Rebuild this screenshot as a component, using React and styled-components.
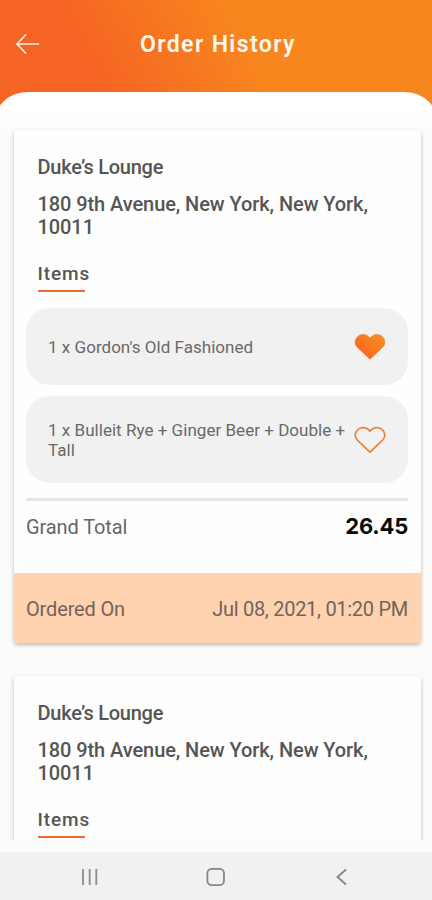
import React from "react";
import styled, { createGlobalStyle } from "styled-components";

const GlobalStyle = createGlobalStyle`
  * { box-sizing: border-box; }
  body { margin: 0; background: #fbfbfb; }
`;

const Screen = styled.div`
  width: 432px;
  height: 900px;
  display: flex;
  flex-direction: column;
  overflow: hidden;
  font-family: Roboto, sans-serif;
  color: #555;
  background: linear-gradient(62deg, #f56423 0px, #f56423 110px, #f8861e 262px) 0 0 / 432px 130px no-repeat #fbfbfb;
`;

const Header = styled.header`
  height: 92px;
  flex: none;
  display: grid;
  grid-template-columns: 56px 1fr 56px;
  align-items: center;
  padding: 0 0 5px;
`;

const BackButton = styled.button`
  border: 0;
  padding: 0 0 0 15px;
  background: none;
  display: flex;
`;

const Title = styled.h1`
  margin: 0;
  padding: 2px 0 0 4px;
  text-align: center;
  white-space: nowrap;
  font: 600 23px/28px Roboto, sans-serif;
  letter-spacing: 1.4px;
  color: #fffaf0;
`;

const Sheet = styled.main`
  flex: none;
  height: 748px;
  margin: 0 -7px;
  padding: 38px 18px 0 21px;
  border-radius: 34px 34px 0 0;
  background: linear-gradient(#fff 0, #fff 20px, #fbfbfb 40px);
  overflow: hidden;
`;

const Card = styled.article`
  height: 513px;
  margin-bottom: 33px;
  display: flex;
  flex-direction: column;
  border-radius: 4px;
  background: #fefefe;
  box-shadow: 0 2px 4px rgba(0, 0, 0, 0.26);
  overflow: hidden;
`;

const Venue = styled.div`
  padding: 26px 23px 0 23.5px;
  font-size: 20px;
  font-weight: 500;
  line-height: 23px;
`;

const VenueName = styled.h2`
  margin: 0 0 14px;
  font: inherit;
  letter-spacing: -0.25px;
`;

const Address = styled.p`
  margin: 0;
  letter-spacing: -0.08px;
`;

const SectionLabel = styled.h3`
  width: max-content;
  margin: 23px 0 0;
  font: 500 19px/23px Roboto, sans-serif;
  letter-spacing: 0.9px;
`;

const Underline = styled.div`
  width: 47px;
  height: 2px;
  margin-top: 5px;
  background: #ee6c2a;
`;

const Items = styled.ul`
  list-style: none;
  margin: 16px 13px 0 12px;
  padding: 0;
  display: flex;
  flex-direction: column;
  gap: 11px;
`;

const Item = styled.li`
  height: ${({ $tall }) => ($tall ? 87 : 77)}px;
  display: flex;
  align-items: center;
  justify-content: space-between;
  padding: 0 22px;
  border-radius: 24px;
  background: #f1f1f1;
  color: #696969;
  font-size: 17px;
  line-height: 20px;
`;

const ItemName = styled.span`
  width: 302px;
  letter-spacing: 0.03px;
`;

const HeartIcon = styled.svg`
  margin-bottom: 1px;
`;

const Total = styled.div`
  height: 74px;
  margin: 15px 13px 0 12px;
  padding-top: 14px;
  border-top: 3px solid #e6e6e6;
  display: flex;
  justify-content: space-between;
  font-size: 20px;
  line-height: 24px;
  letter-spacing: -0.1px;
  color: #666;
`;

const Amount = styled.strong`
  font: 700 22px/23px Inter, sans-serif;
  letter-spacing: -0.2px;
  color: #090909;
`;

const OrderedOn = styled.footer`
  height: 70px;
  margin-top: auto;
  padding: 1px 13px 0 12px;
  display: flex;
  align-items: center;
  justify-content: space-between;
  background: #ffd3b0;
  color: #756259;
  font-size: 20px;
  letter-spacing: -0.15px;
`;

const OrderDate = styled.time`
  letter-spacing: -0.28px;
`;

const SystemBar = styled.nav`
  height: 48px;
  margin-top: auto;
  flex: none;
  display: grid;
  grid-template-columns: repeat(3, 126px);
  justify-content: center;
  align-items: center;
  justify-items: center;
  padding: 1px 0 0;
  background: #f1f1f1;
`;

const HEART =
  "M16 27.2 L3.4 15.2 C1 12.8 0.4 8.8 2.6 5.9 C5.2 2.4 9.6 1.8 12.8 3.4 C14.2 4.1 15.2 5 16 6.2 C16.8 5 17.8 4.1 19.2 3.4 C22.4 1.8 26.8 2.4 29.4 5.9 C31.6 8.8 31 12.8 28.6 15.2 Z";

function Heart({ filled }) {
  return (
    <HeartIcon width="32" height="29" viewBox="0 0 32 29">
      <defs>
        <linearGradient id="heartFill" x1="1" y1="0" x2="0" y2="1">
          <stop offset=".2" stopColor="#fb881d" />
          <stop offset=".8" stopColor="#f56722" />
        </linearGradient>
      </defs>
      <path
        d={HEART}
        fill={filled ? "url(#heartFill)" : "none"}
        stroke={filled ? "url(#heartFill)" : "#ee8138"}
        strokeWidth={filled ? 0.8 : 1.7}
        strokeLinejoin="round"
      />
    </HeartIcon>
  );
}

const order = {
  venue: "Duke’s Lounge",
  address: "180 9th Avenue, New York, New York, 10011",
  items: [
    { name: "1 x Gordon's Old Fashioned", liked: true },
    { name: "1 x Bulleit Rye + Ginger Beer + Double + Tall", liked: false, tall: true },
  ],
  total: "26.45",
  date: "Jul 08, 2021, 01:20 PM",
};

function OrderCard({ data, headingOnly }) {
  return (
    <Card>
      <Venue>
        <VenueName>{data.venue}</VenueName>
        <Address>{data.address}</Address>
        <SectionLabel>Items</SectionLabel>
        <Underline />
      </Venue>
      {!headingOnly && (
        <>
          <Items>
            {data.items.map((item) => (
              <Item key={item.name} $tall={item.tall}>
                <ItemName>{item.name}</ItemName>
                <Heart filled={item.liked} />
              </Item>
            ))}
          </Items>
          <Total>
            <span>Grand Total</span>
            <Amount>{data.total}</Amount>
          </Total>
          <OrderedOn>
            <span>Ordered On</span>
            <OrderDate>{data.date}</OrderDate>
          </OrderedOn>
        </>
      )}
    </Card>
  );
}

export default function App() {
  return (
    <Screen>
      <GlobalStyle />
      <Header>
        <BackButton aria-label="Back">
          <svg width="26" height="22" viewBox="0 0 26 22" fill="none" stroke="#fff4e6" strokeWidth="1.7" strokeLinecap="round" strokeLinejoin="round">
            <path d="M23.5 11H2M10.500 2 2 11l8.500 9" />
          </svg>
        </BackButton>
        <Title>Order History</Title>
      </Header>
      <Sheet>
        <OrderCard data={order} />
        <OrderCard data={order} headingOnly />
      </Sheet>
      <SystemBar>
        <svg width="20" height="20" viewBox="0 0 20 20" stroke="#8b8b8b" strokeWidth="1.8">
          <path d="M3 2v16M9.7 2v16M16.3 2v16" />
        </svg>
        <svg width="20" height="20" viewBox="0 0 20 20" fill="none" stroke="#858585" strokeWidth="1.8">
          <rect x="1.4" y="1.8" width="16.6" height="16.4" rx="4.5" />
        </svg>
        <svg width="20" height="20" viewBox="0 0 20 20" fill="none" stroke="#858585" strokeWidth="1.8">
          <path d="M14 2.5 5.5 10l8.5 7.5" />
        </svg>
      </SystemBar>
    </Screen>
  );
}
